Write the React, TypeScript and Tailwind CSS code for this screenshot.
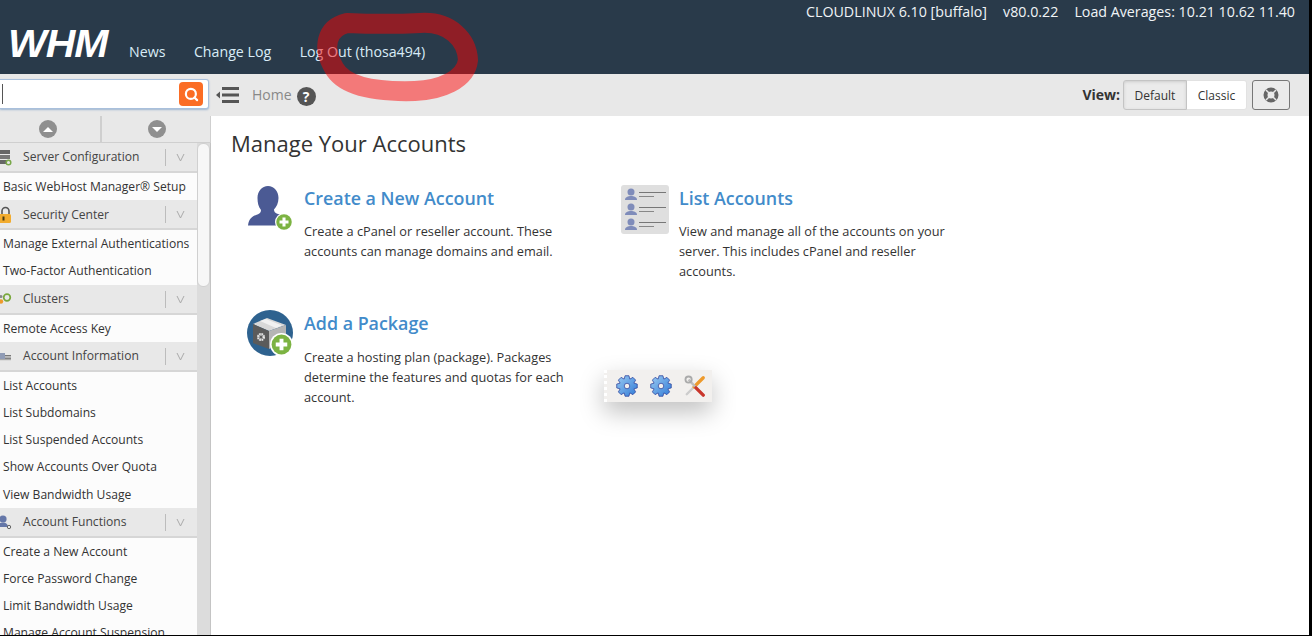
import { Search } from "lucide-react";

const groups = [
  { title: "Server Configuration", icon: "server", items: ["Basic WebHost Manager® Setup"] },
  { title: "Security Center", icon: "lock", items: ["Manage External Authentications", "Two-Factor Authentication"] },
  { title: "Clusters", icon: "cluster", items: ["Remote Access Key"] },
  { title: "Account Information", icon: "info", items: ["List Accounts", "List Subdomains", "List Suspended Accounts", "Show Accounts Over Quota", "View Bandwidth Usage"] },
  { title: "Account Functions", icon: "func", items: ["Create a New Account", "Force Password Change", "Limit Bandwidth Usage", "Manage Account Suspension"] },
];

function GroupIcon({ name }: { name: string }) {
  if (name === "server")
    return (
      <svg width="12" height="18" viewBox="0 0 12 18" className="overflow-hidden">
        <rect x="-3" y="1" width="13" height="4" fill="#666" />
        <rect x="-3" y="6" width="13" height="4" fill="#777" />
        <rect x="-3" y="11" width="10" height="4" fill="#666" />
        <circle cx="8.500" cy="13.500" r="2.300" fill="none" stroke="#79a84a" strokeWidth="1.500" />
      </svg>
    );
  if (name === "lock")
    return (
      <svg width="12" height="18" viewBox="0 0 12 18">
        <path d="M2 8V5a3.500 3.500 0 0 1 7 0v3" fill="none" stroke="#555" strokeWidth="1.600" />
        <rect x="-1" y="8" width="12" height="9" rx="1.500" fill="#f2ac2f" />
        <rect x="2.500" y="10.500" width="2" height="4" fill="#4a3a10" />
      </svg>
    );
  if (name === "cluster")
    return (
      <svg width="12" height="18" viewBox="0 0 12 18">
        <circle cx="7" cy="7.500" r="3.300" fill="none" stroke="#7aa83c" strokeWidth="1.700" />
        <circle cx="1" cy="11.500" r="2.200" fill="#ee9a2b" />
        <circle cx="1" cy="6.500" r="1.500" fill="#888" />
      </svg>
    );
  if (name === "info")
    return (
      <svg width="12" height="18" viewBox="0 0 12 18">
        <rect x="-2" y="6" width="7" height="7" fill="#8f9bb5" />
        <rect x="5" y="8" width="6" height="1.400" fill="#777" />
        <rect x="5" y="10.500" width="6" height="1.400" fill="#777" />
        <rect x="-2" y="12" width="13" height="1.200" fill="#aaa" />
      </svg>
    );
  return (
    <svg width="12" height="18" viewBox="0 0 12 18">
      <circle cx="3" cy="6" r="3.600" fill="#6577a8" />
      <path d="M-3 14c0-3 3-4.500 6-4.500s5 1.500 5 4.500z" fill="#6577a8" />
      <circle cx="9" cy="14" r="1.700" fill="none" stroke="#666" strokeWidth="1" />
    </svg>
  );
}

function GreenPlus({ size }: { size: number }) {
  return (
    <svg width={size} height={size} viewBox="0 0 20 20">
      <circle cx="10" cy="10" r="10" fill="#fff" />
      <circle cx="10" cy="10" r="8.600" fill="#7cb342" />
      <path d="M10 5v10M5 10h10" stroke="#fff" strokeWidth="3.400" />
    </svg>
  );
}

function CreateAccountIcon() {
  return (
    <div className="relative w-[46px] h-[46px] shrink-0">
      <svg width="46" height="46" viewBox="0 0 46 46">
        <path d="M21 1c6 0 10.500 5 10.500 12 0 5-2 9-4.500 11.500 0 2.500 1 3.500 4 4.500 4 1.500 7 3 8.500 11.500H1c1-7 4-9 8-10.500 3-1 5-2 5-5C11.500 22 10.500 18 10.500 13 10.500 6 15 1 21 1z" fill="#4b5a94" />
      </svg>
      <div className="absolute right-0 bottom-0 w-[18px] h-[18px]">
        <GreenPlus size={18} />
      </div>
    </div>
  );
}

function PackageIcon() {
  return (
    <div className="relative w-[46px] h-[46px] shrink-0">
      <svg width="46" height="46" viewBox="0 0 46 46">
        <circle cx="23" cy="23" r="23" fill="#2e628f" />
        <path d="M6 14l14-6 19 7-17 6z" fill="#d8d8d8" />
        <path d="M6 14l16 7v18L6 33z" fill="#5b5b5b" />
        <path d="M22 21l17-6v16l-17 8z" fill="#b5b5b5" />
        <path d="M13 11l6-2 16 6.500-6 2.500z" fill="#f1f1f1" />
        <circle cx="14" cy="27" r="2.800" fill="none" stroke="#e8e8e8" strokeWidth="2.400" strokeDasharray="1.600 0.600" />
      </svg>
      <div className="absolute right-0 bottom-0 w-[23px] h-[23px]">
        <GreenPlus size={23} />
      </div>
    </div>
  );
}

function ListIcon() {
  return (
    <svg width="48" height="49" viewBox="0 0 48 49" className="shrink-0">
      <rect width="48" height="49" rx="3" fill="#dfdfdf" />
      {[5, 20, 35].map((y) => (
        <g key={y}>
          <circle cx="10" cy={y + 2} r="3.500" fill="#7f8cba" />
          <path d={`M4 ${y + 10}c0-3 3-4 6-4s6 1 6 4z`} fill="#7f8cba" />
          <rect x="18" y={y + 2} width="27" height="1" fill="#777" />
          <rect x="18" y={y + 6} width="15" height="1" fill="#888" />
        </g>
      ))}
    </svg>
  );
}

// cog outline with 8 square teeth
function gearPath() {
  const pts: string[] = [];
  for (let i = 0; i < 8; i++) {
    const a = (i * Math.PI) / 4;
    const spots: [number, number][] = [[8.2, -0.62], [11.4, -0.3], [11.4, 0.3], [8.2, 0.62]];
    spots.forEach(([r, d]) => {
      const x = 12 + r * Math.cos(a + d * 0.62);
      const y = 12 + r * Math.sin(a + d * 0.62);
      pts.push(`${x.toFixed(2)} ${y.toFixed(2)}`);
    });
  }
  return `M${pts.join("L")}Z`;
}

function Gear({ id }: { id: string }) {
  return (
    <svg width="22" height="22" viewBox="0 0 24 24">
      <defs>
        <linearGradient id={id} x1="0" y1="0" x2="1" y2="1">
          <stop offset="0" stopColor="#9ccbf2" />
          <stop offset="1" stopColor="#2f7ad6" />
        </linearGradient>
      </defs>
      <path d={gearPath()} fill={`url(#${id})`} stroke="#2a3f9a" strokeWidth="0.8" />
      <circle cx="12" cy="12" r="3" fill="#f2f0ee" stroke="#2a3f9a" strokeWidth="0.8" />
    </svg>
  );
}

function Tools() {
  return (
    <svg width="22" height="22" viewBox="0 0 24 24">
      <path d="M3 21L20 4" stroke="#ccc" strokeWidth="2.600" strokeLinecap="round" />
      <path d="M11 13L21 3" stroke="#ee9a2b" strokeWidth="3.600" strokeLinecap="round" />
      <path d="M5 5L20 21" stroke="#bdbdbd" strokeWidth="2.600" />
      <path d="M13 14L21 22" stroke="#c9362c" strokeWidth="3.600" strokeLinecap="round" />
      <circle cx="5" cy="5" r="3.400" fill="none" stroke="#aaa" strokeWidth="2" />
    </svg>
  );
}

function Card({ icon, title, children, className, gapClass = "gap-[11px]", descClass = "mt-[10px]" }: { icon: React.ReactNode; title: string; children: React.ReactNode; className: string; gapClass?: string; descClass?: string }) {
  return (
    <div className={`flex ${gapClass} ${className}`}>
      {icon}
      <div>
        <h2 className="text-[17.850px] leading-[26px] font-semibold text-[#428bca]">{title}</h2>
        <p className={`${descClass} text-[12.750px] leading-[20px] text-[#333]`}>{children}</p>
      </div>
    </div>
  );
}

export default function App() {
  return (
    <div className="h-[636px] w-[1312px] overflow-hidden bg-black">
      <div className="relative h-[635px] w-[1309px] overflow-hidden bg-white font-['Open_Sans',sans-serif]">
        <header className="h-[74px] bg-[#293a4a] text-[#f0f4f7]">
          <div className="flex justify-end gap-4 pr-[14px] pt-[2px] text-[14.250px] leading-[20px]">
            <span>CLOUDLINUX 6.10 [buffalo]</span>
            <span>v80.0.22</span>
            <span>Load Averages: 10.21 10.62 11.40</span>
          </div>
          <div className="flex pl-[8px]">
            <div className="w-[121px] h-[52px] overflow-visible">
              <span className="block origin-left scale-x-[1.08] text-[38px] leading-[44px] font-bold italic tracking-[-1px] text-white font-['Liberation_Sans',sans-serif]">WHM</span>
            </div>
            <nav className="flex gap-[28.500px] text-[14.200px] leading-[20px] text-[#d9ecf7] pt-[20px]">
              <span>News</span>
              <span>Change Log</span>
              <span>Log Out (thosa494)</span>
            </nav>
          </div>
        </header>

        <div className="flex h-[561px]">
          <aside className="w-[211px] shrink-0 flex flex-col">
            <div className="h-[42px] bg-[#e8e8e8] pt-[5px] pr-[2px]">
              <div className="h-[30px] bg-white rounded-r-[3px] border border-l-0 border-[#a9c0dc] shadow-[0_1px_2px_#9fb6d0] flex items-center justify-between pl-[2px] pr-[5px]">
                <div className="w-px h-[20px] bg-[#555]" />
                <div className="w-[24px] h-[24px] bg-[#fb6d25] rounded-[4px] flex items-center justify-center">
                  <Search size={15} strokeWidth={3.500} className="text-white" />
                </div>
              </div>
            </div>
            <div className="h-[27px] flex bg-[#e8e8e8] border-b border-[#cfcfcf]">
              <div className="w-[102px] flex items-center justify-center border-r-2 border-[#cfcfcf] pr-[5px]">
                <div className="w-[18px] h-[18px] rounded-full bg-[#8f8f8f] flex items-center justify-center">
                  <div className="w-0 h-0 border-x-[5px] border-x-transparent border-b-[5px] border-b-white" />
                </div>
              </div>
              <div className="flex-1 flex items-center justify-center border-r border-[#cfcfcf] pl-[2px]">
                <div className="w-[18px] h-[18px] rounded-full bg-[#8f8f8f] flex items-center justify-center">
                  <div className="w-0 h-0 border-x-[5px] border-x-transparent border-t-[5px] border-t-white" />
                </div>
              </div>
            </div>
            <div className="flex-1 flex min-h-0">
              <div className="w-[197px] overflow-hidden bg-[#fcfcfc]">
                {groups.map((g) => (
                  <div key={g.title}>
                    <div className="h-[30px] pt-[1px] flex items-center bg-[#e8e8e8] border-b-2 border-[#d6d6d6] text-[12.100px] text-[#444]">
                      <div className="w-[23px] flex items-center">
                        <GroupIcon name={g.icon} />
                      </div>
                      <span className="flex-1">{g.title}</span>
                      <div className="w-[32px] h-[17px] border-l border-[#bcbcbc] flex items-center justify-center pr-[2px]">
                        <svg width="9" height="9" viewBox="0 0 9 9">
                          <path d="M1 1l3.500 7L8 1" fill="none" stroke="#aaa" strokeWidth="1" />
                        </svg>
                      </div>
                    </div>
                    <ul className="text-[12.100px] text-[#333]">
                      {g.items.map((it) => (
                        <li key={it} className="h-[27.200px] pl-[3px] leading-[27px] whitespace-nowrap">
                          {it}
                        </li>
                      ))}
                    </ul>
                  </div>
                ))}
              </div>
              <div className="w-[14px] bg-[#dcdcdc] border-r border-[#c4c4c4] relative">
                <div className="absolute top-0 left-0 w-[13px] h-[144px] rounded-[6px] bg-[#f7f7f7] border border-[#d0d0d0]" />
              </div>
            </div>
          </aside>

          <main className="flex-1 flex flex-col min-w-0">
            <div className="h-[42px] bg-[#e8e8e8] flex items-center pl-[5px] pr-[19px]">
              <svg width="24" height="20" viewBox="0 0 24 20">
                <path d="M0 10l4-3.500v7z" fill="#555" />
                <rect x="6" y="2" width="17" height="3" fill="#555" />
                <rect x="6" y="8.500" width="17" height="3" fill="#555" />
                <rect x="6" y="15" width="17" height="3" fill="#555" />
              </svg>
              <span className="ml-[12px] mb-[2px] text-[14px] text-[#888]">Home</span>
              <div className="ml-[5px] mt-[2px] w-[19px] h-[19px] rounded-full bg-[#555] text-white text-[14px] font-bold flex items-center justify-center">?</div>
              <div className="ml-auto flex items-center">
                <span className="text-[14px] font-bold text-[#333] mr-[3px] mb-[2px]">View:</span>
                <div className="flex h-[30px] text-[12px] text-[#333]">
                  <div className="w-[64px] pt-[1px] bg-[#ebebeb] border border-[#c4c4c4] rounded-l-[3px] flex items-center justify-center shadow-[inset_0_1px_3px_#ccc]">Default</div>
                  <div className="w-[60px] pt-[1px] bg-white border border-l-0 border-[#e2e2e2] rounded-r-[3px] flex items-center justify-center">Classic</div>
                </div>
                <div className="ml-[5px] w-[38px] h-[30px] border border-[#777] rounded-[3px] bg-[#ebebeb] flex items-center justify-center">
                  <svg width="16" height="16" viewBox="0 0 16 16">
                    <circle cx="8" cy="8" r="5.500" fill="none" stroke="#666" strokeWidth="4" />
                    <path d="M3 3l3 3M13 3l-3 3M3 13l3-3M13 13l-3-3" stroke="#e8e8e8" strokeWidth="1.500" />
                  </svg>
                </div>
              </div>
            </div>

            <div className="relative flex-1 pl-[20px] pt-[11px]">
              <h1 className="text-[22px] leading-[32px] text-[#333]">Manage Your Accounts</h1>
              <div className="mt-[26px] grid grid-cols-[375px_340px] pl-[16px]">
                <Card icon={<CreateAccountIcon />} title="Create a New Account" className="h-[125px]">
                  Create a cPanel or reseller account. These<br />accounts can manage domains and email.
                </Card>
                <Card icon={<ListIcon />} title="List Accounts" className="h-[125px] ml-[-1px]" gapClass="gap-[10px]">
                  View and manage all of the accounts on your<br />server. This includes cPanel and reseller<br />accounts.
                </Card>
                <Card icon={<PackageIcon />} title="Add a Package" className="h-[125px]" descClass="mt-[11px]">
                  Create a hosting plan (package). Packages<br />determine the features and quotas for each<br />account.
                </Card>
              </div>
              <div className="absolute left-[393px] top-[254px] w-[108px] h-[32px] bg-[#f2f0ee] border-l-[3px] border-dotted border-white shadow-[0_10px_24px_rgba(0,0,0,0.25)] flex items-center gap-[12px] pl-[9px]">
                <Gear id="g1" />
                <Gear id="g2" />
                <Tools />
              </div>
            </div>
          </main>
        </div>

        <svg width="1309" height="635" viewBox="0 0 1309 635" className="absolute inset-0 pointer-events-none">
          <path
            d="M347 23C370 24 400 24 420 23 450 21 467 40 468 60 466 80 440 90 415 91 380 92 345 88 334 68 322 48 326 28 347 23Z"
            fill="none"
            stroke="rgba(255,0,0,0.48)"
            strokeWidth="20"
            strokeLinejoin="round"
          />
        </svg>
      </div>
    </div>
  );
}
